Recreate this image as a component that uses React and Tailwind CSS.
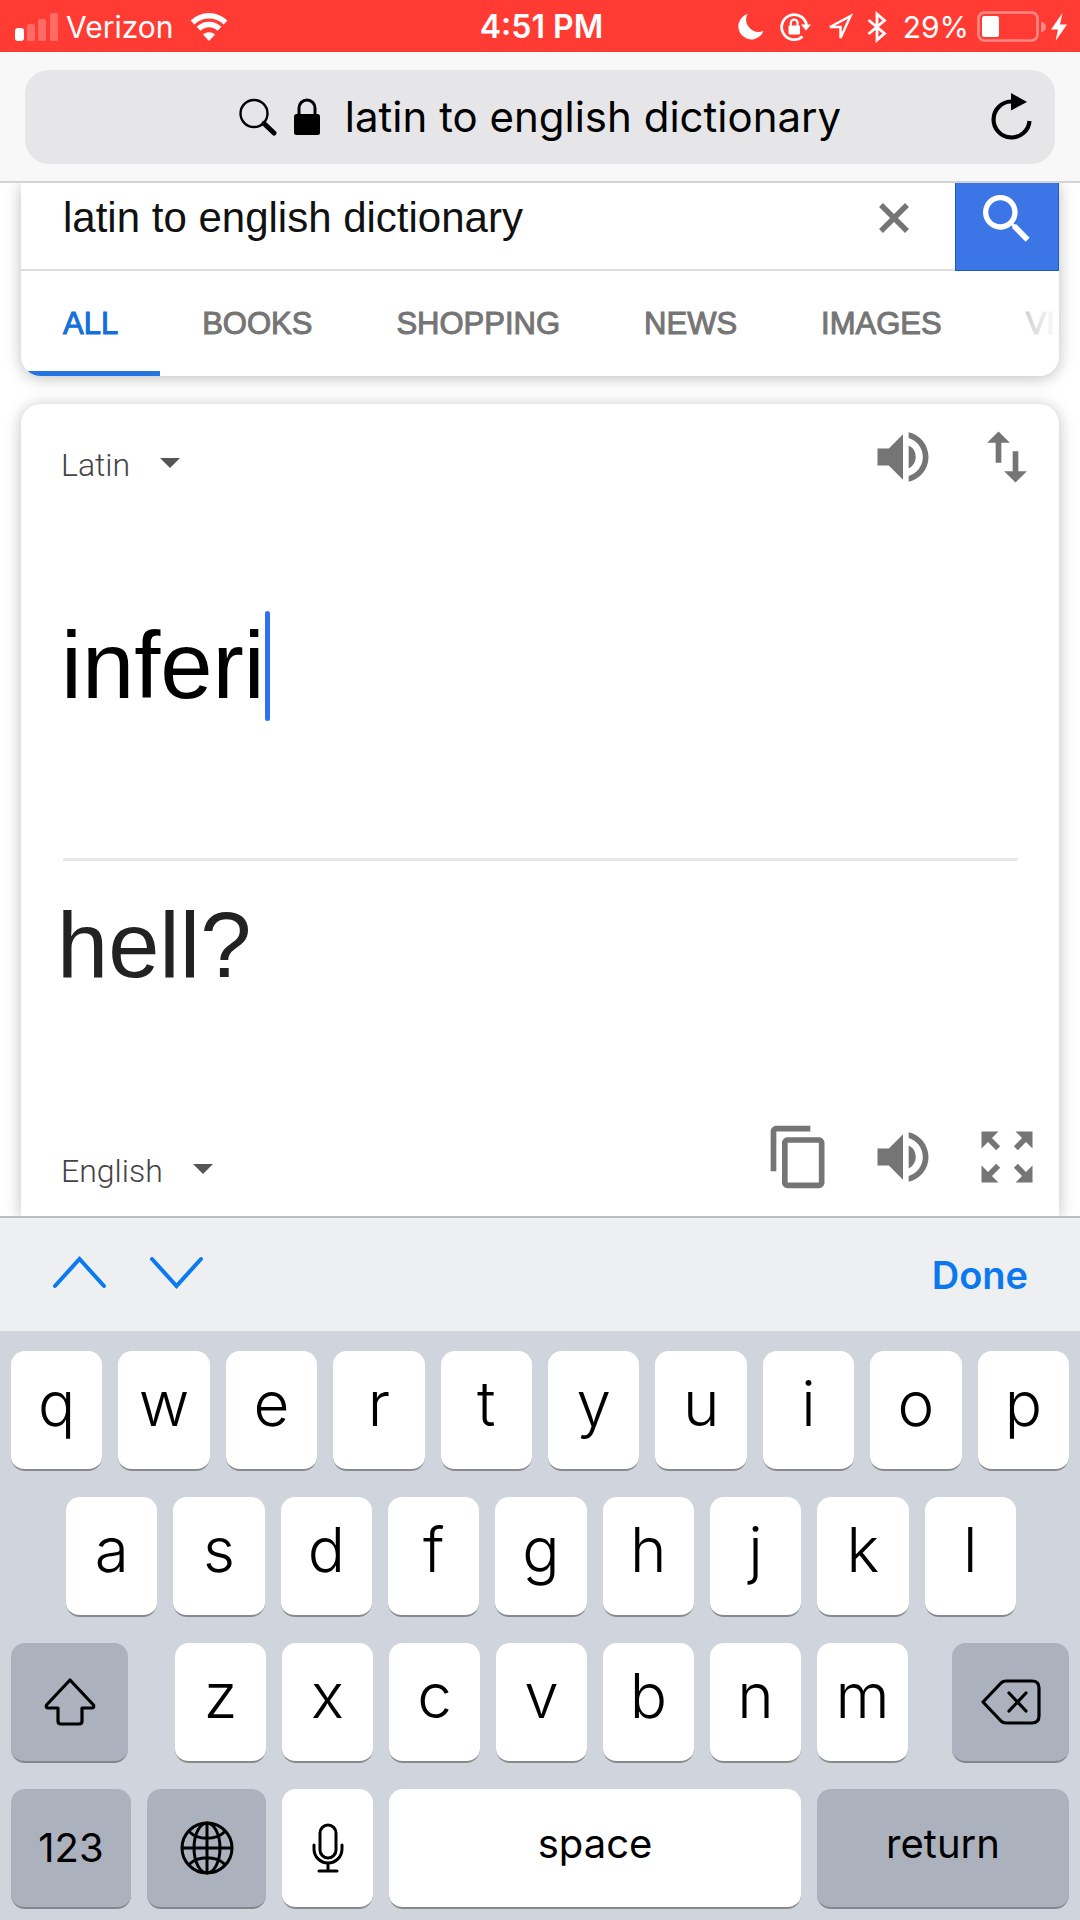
import React, { useState } from "react";
import { MdContentCopy, MdSearch, MdSwapVert, MdVolumeUp, MdZoomOutMap } from "react-icons/md";

const TABS = ["ALL", "BOOKS", "SHOPPING", "NEWS", "IMAGES", "VIDEOS"];
const ROW_ONE = ["q", "w", "e", "r", "t", "y", "u", "i", "o", "p"];
const ROW_TWO = ["a", "s", "d", "f", "g", "h", "j", "k", "l"];
const ROW_THREE = ["z", "x", "c", "v", "b", "n", "m"];

function StatusBar() {
  return (
    <header className="grid grid-cols-[1fr_auto_1fr] items-center h-[52px] pt-[2px] pl-[15px] pr-3 bg-[#ff3b33] text-white text-[30px] leading-none">
      <div className="flex items-center">
        <svg width="43" height="28" viewBox="0 0 43 28" fill="#fff">
          <rect x="0" y="15" width="9" height="13" rx="3" />
          <rect x="12" y="11" width="8" height="17" rx="2" opacity="0.25" />
          <rect x="23" y="6" width="8" height="22" rx="2" opacity="0.25" />
          <rect x="35" y="0" width="8" height="28" rx="2" opacity="0.25" />
        </svg>
        <span className="ml-2">Verizon</span>
        <svg className="ml-4" width="38" height="28" viewBox="0 0 38 28" fill="none" stroke="#fff">
          <path d="M2.5 9.5C12 .5 26 .5 35.5 9.5" strokeWidth="5.5" />
          <path d="M8.5 15.8C14.5 10 23.5 10 29.5 15.8" strokeWidth="5.5" />
          <path d="M19 28l-6-6.5c3.5-3 8.5-3 12 0z" fill="#fff" stroke="none" />
        </svg>
      </div>

      <span className="text-[32px] leading-none font-semibold">4:51 PM</span>

      <div className="flex items-center justify-end">
        <svg width="26" height="26" viewBox="0 0 26 26" fill="#fff">
          <path d="M9.5 0A13 13 0 1 0 25.5 17 12.5 12.5 0 0 1 9.5 0z" />
        </svg>
        <svg className="ml-4" width="31" height="30" viewBox="0 0 31 30" fill="none" stroke="#fff">
          <path d="M22.5 24.5A12.5 12.5 0 1 1 26.5 13" strokeWidth="2.8" />
          <path d="M21 12.5h10l-5 6z" fill="#fff" stroke="none" />
          <rect x="8.5" y="13.5" width="11.5" height="9" rx="1" fill="#fff" stroke="none" />
          <path d="M10.8 14v-3a3.4 3.4 0 0 1 6.8 0v3" strokeWidth="2.2" />
        </svg>
        <svg className="ml-4" width="26" height="28" viewBox="0 0 26 28" fill="none" stroke="#fff" strokeWidth="2.4">
          <path d="M23.5 3L3 14h10.5v11z" />
        </svg>
        <svg className="ml-[14px]" width="20" height="32" viewBox="0 0 20 32" fill="none" stroke="#fff" strokeWidth="2.8">
          <path d="M1.5 9l16 13.5-7.500 6.500V3l7.500 6.500-16 13.500" />
        </svg>
        <span className="ml-4">29%</span>
        <svg className="ml-2" width="69" height="32" viewBox="0 0 69 32" fill="#fff">
          <rect x="1.5" y="1.5" width="59" height="28" rx="6" fill="none" stroke="#fff" strokeWidth="2.6" opacity="0.4" />
          <rect x="5" y="5" width="17" height="21" rx="2.5" />
          <path d="M64 10.5c3.500 1 5 3 5 5.500s-1.500 4.500-5 5.500z" opacity="0.4" />
        </svg>
        <svg className="ml-1" width="18" height="28" viewBox="0 0 18 28" fill="#fff">
          <path d="M12.5 0L1 16.5h7L5.5 28 17 11.5h-7z" />
        </svg>
      </div>
    </header>
  );
}

function AddressBar({ query }) {
  return (
    <div className="px-[25px] pt-[18px] pb-[17px] bg-[#f8f8f9] border-b-2 border-[#d3d3d6] relative z-10">
      <div className="grid grid-cols-[1fr_auto_1fr] items-center h-[94px] rounded-3xl bg-[#e6e6e8]">
        <span />
        <label className="flex items-center">
          <svg width="38" height="38" viewBox="0 0 38 38" fill="none" stroke="#000">
            <circle cx="15" cy="15.5" r="13.5" strokeWidth="2.4" />
            <path d="M25 25.5L35 35" strokeWidth="5" strokeLinecap="round" />
          </svg>
          <svg className="ml-4" width="28" height="38" viewBox="0 0 28 38" fill="none" stroke="#000">
            <path d="M6 18V10a8 8 0 0 1 16 0v8" strokeWidth="3" />
            <rect x="1" y="16" width="26" height="21" rx="2.5" fill="#000" stroke="none" />
          </svg>
          <input
            aria-label="Address"
            defaultValue={query}
            className="ml-6 [field-sizing:content] text-[42px] leading-[52px] text-black outline-none"
          />
        </label>
        <button aria-label="Reload" className="justify-self-end mr-[22px]">
          <svg width="42" height="48" viewBox="0 0 42 48" fill="none" stroke="#000">
            <path d="M20 8.5A18 18 0 1 0 38.5 28" strokeWidth="4.2" />
            <path d="M20 0l16 9-16 8.5z" fill="#000" stroke="none" />
          </svg>
        </button>
      </div>
    </div>
  );
}

function SearchCard({ query }) {
  return (
    <section className="rounded-b-[20px] bg-white shadow-[0_2px_16px_rgba(0,0,0,0.26)] overflow-hidden font-['Liberation_Sans',Arial,sans-serif]">
      <div className="flex h-[88px]">
        <div className="flex flex-1 items-center min-w-0 pl-[42px] pr-[45px] pb-4 border-b-2 border-[#dedede]">
          <input
            aria-label="Search"
            defaultValue={query}
            className="flex-1 min-w-0 text-[42px] leading-[48px] text-[#111] outline-none"
          />
          <button aria-label="Clear search">
            <svg width="32" height="32" viewBox="0 0 32 32" stroke="#757575" strokeWidth="5.5">
              <path d="M3 3l26 26M29 3L3 29" />
            </svg>
          </button>
        </div>
        <button aria-label="Search" className="flex items-center justify-center w-[104px] pb-4 bg-[#3b75e6] border border-t-0 border-[#1b5cc0]">
          <MdSearch size={64} color="#fff" />
        </button>
      </div>

      <nav className="relative flex text-[31px] overflow-hidden">
        {TABS.map((tab, i) => (
          <a
            key={tab}
            href="#"
            className={`shrink-0 px-[42px] pt-[35px] pb-[29px] leading-9 border-b-[5px] [-webkit-text-stroke:1px_currentColor] ${
              i === 0 ? "text-[#1270dc] border-[#2674e0]" : "text-[#757575] border-transparent"
            }`}
          >
            {tab}
          </a>
        ))}
        <div className="absolute inset-y-0 right-0 w-20 bg-linear-to-r from-white/20 to-white" />
      </nav>
    </section>
  );
}

function LanguageSelect({ label, value, options }) {
  return (
    <label className="flex items-center">
      <select
        aria-label={label}
        defaultValue={value}
        className="appearance-none [field-sizing:content] font-['Roboto',sans-serif] font-light text-[32px] leading-10 text-[#444] outline-none"
      >
        {options.map((o) => (
          <option key={o}>{o}</option>
        ))}
      </select>
      <svg className="ml-[30px] mb-1" width="20" height="10" viewBox="0 0 20 10" fill="#555">
        <path d="M0 0h20L10 10z" />
      </svg>
    </label>
  );
}

function TranslateCard() {
  const [word, setWord] = useState("inferi");

  return (
    <section className="flex-1 mt-7 pl-10 pr-[18px] rounded-t-[20px] bg-white shadow-[0_2px_16px_rgba(0,0,0,0.26)] font-['Liberation_Sans',Arial,sans-serif]">
      <div className="flex items-start justify-between pt-[19px]">
        <div className="mt-[22px]">
          <LanguageSelect label="Translate from" value="Latin" options={["Latin", "English"]} />
        </div>
        <div className="flex gap-9 text-[#757575]">
          <button aria-label="Listen"><MdVolumeUp size={68} /></button>
          <button aria-label="Swap languages"><MdSwapVert size={68} /></button>
        </div>
      </div>

      <div className="flex items-center mt-[120px]">
        <input
          aria-label="Text to translate"
          value={word}
          onChange={(e) => setWord(e.target.value)}
          className="[field-sizing:content] text-[94px] leading-[108px] text-black outline-none caret-transparent"
        />
        <span className="w-[5px] h-[110px] rounded-full bg-[#2f6ff0]" />
      </div>

      <hr className="mt-[137px] ml-[2px] mr-[23px] border-t-[3px] border-[#e8e8e8]" />

      <p className="mt-[30px] -ml-1 text-[92px] leading-[108px] text-[#222]">hell?</p>

      <div className="flex items-start justify-between mt-[124px]">
        <div className="mt-7">
          <LanguageSelect label="Translate to" value="English" options={["English", "Latin"]} />
        </div>
        <div className="flex gap-9 text-[#757575]">
          <button aria-label="Copy"><MdContentCopy size={68} /></button>
          <button aria-label="Listen to translation"><MdVolumeUp size={68} /></button>
          <button aria-label="Full screen"><MdZoomOutMap size={68} /></button>
        </div>
      </div>
    </section>
  );
}

function InputToolbar() {
  return (
    <div className="relative flex items-center h-[115px] px-[52px] pb-1 bg-[#eeeff1] border-t-2 border-[#bcbdc1]">
      <button aria-label="Previous field">
        <svg width="55" height="34" viewBox="0 0 55 34" fill="none" stroke="#0a7aee" strokeWidth="4" strokeLinecap="round">
          <path d="M3 30L27.5 3 52 30" />
        </svg>
      </button>
      <button aria-label="Next field" className="ml-[42px]">
        <svg width="55" height="34" viewBox="0 0 55 34" fill="none" stroke="#0a7aee" strokeWidth="4" strokeLinecap="round">
          <path d="M3 3l24.5 27L52 3" />
        </svg>
      </button>
      <button className="ml-auto mt-1 text-[38px] leading-none font-semibold text-[#0a78ee]">Done</button>
    </div>
  );
}

function LetterKey({ letter }) {
  return (
    <button className="flex-1 h-[120px] pb-3 rounded-[14px] bg-white border-b-2 border-[#87898d] text-[62px] leading-none font-light text-black">
      {letter}
    </button>
  );
}

function Keyboard() {
  const dark = "flex items-center justify-center h-[120px] rounded-[14px] bg-[#abb2be] border-b-2 border-[#83888f] text-black";

  return (
    <div className="flex flex-col gap-[26px] pt-5 pb-[11px] bg-[#d0d4dc]">
      <div className="flex gap-4 px-[11px]">
        {ROW_ONE.map((l) => <LetterKey key={l} letter={l} />)}
      </div>

      <div className="flex gap-4 pl-[66px] pr-16">
        {ROW_TWO.map((l) => <LetterKey key={l} letter={l} />)}
      </div>

      <div className="flex px-[11px]">
        <button aria-label="Shift" className={`${dark} w-[117px]`}>
          <svg width="52" height="48" viewBox="0 0 52 48" fill="none" stroke="#000" strokeWidth="3.2" strokeLinejoin="round">
            <path d="M26 2L2.5 27q-1 3 2 3H14v13q0 3 3 3h18q3 0 3-3V30h9.5q3 0 2-3z" />
          </svg>
        </button>
        <div className="flex flex-1 gap-4 ml-[47px] mr-11">
          {ROW_THREE.map((l) => <LetterKey key={l} letter={l} />)}
        </div>
        <button aria-label="Delete" className={`${dark} w-[117px]`}>
          <svg width="60" height="46" viewBox="0 0 60 46" fill="none" stroke="#000" strokeWidth="3.2" strokeLinejoin="round" strokeLinecap="round">
            <path d="M2 23L20 4q2-2 5-2h26q7 0 7 7v28q0 7-7 7H25q-3 0-5-2z" />
            <path d="M28 14l17 18M45 14L28 32" />
          </svg>
        </button>
      </div>

      <div className="flex gap-4 px-[11px]">
        <button className={`${dark} w-[120px] text-[40px]`}>123</button>
        <button aria-label="Next keyboard" className={`${dark} w-[119px]`}>
          <svg width="54" height="54" viewBox="0 0 54 54" fill="none" stroke="#000" strokeWidth="3">
            <circle cx="27" cy="27" r="25" />
            <ellipse cx="27" cy="27" rx="13" ry="25" />
            <path d="M27 2v50M2 27h50M9 10.5c9 9 27 9 36 0M9 43.5c9-9 27-9 36 0" />
          </svg>
        </button>
        <button aria-label="Dictate" className="flex items-center justify-center w-[91px] h-[120px] rounded-[14px] bg-white border-b-2 border-[#87898d]">
          <svg width="32" height="50" viewBox="0 0 32 50" fill="none" stroke="#000" strokeWidth="3" strokeLinecap="round">
            <rect x="8" y="2" width="16" height="33" rx="8" />
            <path d="M2 22v4a14 14 0 0 0 28 0v-4M16 40v8M7 48h18" />
          </svg>
        </button>
        <button className="flex-1 h-[120px] pb-2 rounded-[14px] bg-white border-b-2 border-[#87898d] text-[40px] text-black">
          space
        </button>
        <button className={`${dark} w-[252px] pb-2 text-[40px]`}>return</button>
      </div>
    </div>
  );
}

export default function App() {
  const query = "latin to english dictionary";

  return (
    <div className="flex flex-col min-h-screen bg-white font-['Inter',sans-serif]">
      <StatusBar />
      <AddressBar query={query} />
      <main className="flex flex-1 flex-col px-[21px] overflow-hidden">
        <SearchCard query={query} />
        <TranslateCard />
      </main>
      <InputToolbar />
      <Keyboard />
    </div>
  );
}
